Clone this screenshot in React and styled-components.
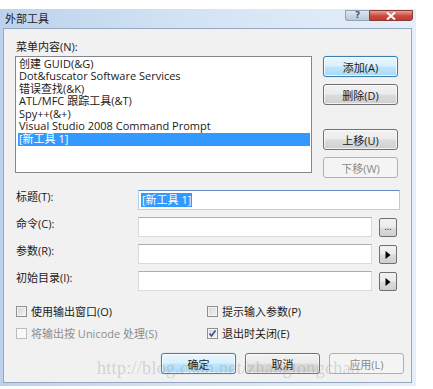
import React from 'react'
import styled, { createGlobalStyle, css } from 'styled-components'

const GlobalStyle = createGlobalStyle`
  body {
    margin: 0;
    background: #fff;
    font-family: "Open Sans", "Noto Sans CJK SC", sans-serif;
    font-size: 11px;
    color: #1a1a1a;
  }
`

const menuItems = [
  '创建 GUID(&G)',
  'Dot&fuscator Software Services',
  '错误查找(&K)',
  'ATL/MFC 跟踪工具(&T)',
  'Spy++(&+)',
  'Visual Studio 2008 Command Prompt',
  '[新工具 1]',
]

const fields = [
  { label: '标题(T):', value: '[新工具 1]', focused: true },
  { label: '命令(C):', button: 'dots' },
  { label: '参数(R):', button: 'arrow' },
  { label: '初始目录(I):', button: 'arrow' },
]

export default function App() {
  return (
    <>
      <GlobalStyle />
      <Window>
        <TitleBar>
          <Caption>外部工具</Caption>
          <CaptionButtons>
            <HelpButton>?</HelpButton>
            <CloseButton>
              <svg width="10" height="8" viewBox="0 0 10 8">
                <path d="M1 0.5 L9 7.5 M9 0.5 L1 7.5" stroke="#fff" strokeWidth="2" />
              </svg>
            </CloseButton>
          </CaptionButtons>
        </TitleBar>
        <Body>
          <TopSection>
            <SectionLabel>菜单内容(N):</SectionLabel>
            <ListBox>
              {menuItems.map((item, i) => (
                <ListItem key={item} selected={i === menuItems.length - 1}>
                  {item}
                </ListItem>
              ))}
            </ListBox>
            <SideButtons>
              <Button variant="default">添加(A)</Button>
              <Button>删除(D)</Button>
              <Button spaced>上移(U)</Button>
              <Button disabled>下移(W)</Button>
            </SideButtons>
          </TopSection>

          <Fields>
            {fields.map((f) => (
              <FieldRow key={f.label}>
                <FieldLabel>{f.label}</FieldLabel>
                <Input focused={f.focused}>
                  {f.value && <Selection>{f.value}</Selection>}
                </Input>
                {f.button && (
                  <SmallButton>
                    {f.button === 'dots' ? (
                      <Dots>...</Dots>
                    ) : (
                      <svg width="6" height="8" viewBox="0 0 6 8">
                        <path d="M0.5 0 L5.5 4 L0.5 8 Z" fill="#000" />
                      </svg>
                    )}
                  </SmallButton>
                )}
              </FieldRow>
            ))}
          </Fields>

          <Checks>
            <CheckItem>
              <Box />
              使用输出窗口(O)
            </CheckItem>
            <CheckItem>
              <Box />
              提示输入参数(P)
            </CheckItem>
            <CheckItem disabled>
              <Box disabled />
              将输出按 Unicode 处理(S)
            </CheckItem>
            <CheckItem>
              <Box>
                <svg width="9" height="9" viewBox="0 0 9 9">
                  <path d="M1.5 4.5 L3.5 7 L7.5 1.5" stroke="#3b4f8a" strokeWidth="1.6" fill="none" />
                </svg>
              </Box>
              退出时关闭(E)
            </CheckItem>
          </Checks>

          <Footer>
            <Button variant="default">确定</Button>
            <Button>取消</Button>
            <Button disabled>应用(L)</Button>
          </Footer>

          <Watermark>http://blog.csdn.net/zhangtongchao</Watermark>
        </Body>
      </Window>
    </>
  )
}

const Window = styled.div`
  margin-top: 9px;
  width: 416px;
  height: 377px;
  display: flex;
  flex-direction: column;
  padding: 0 4px 3px 3px;
  box-sizing: border-box;
  background: linear-gradient(to right, #bcd2ec 0%, #d3e3f4 45%, #e6eff9 100%);
`

const TitleBar = styled.div`
  height: 19px;
  display: flex;
  align-items: flex-start;
  justify-content: space-between;
`

const Caption = styled.div`
  padding: 3px 0 0 2px;
  font-size: 11px;
  line-height: 14px;
  color: #1e1e1e;
`

const CaptionButtons = styled.div`
  display: flex;
  margin-top: 1px;
  margin-right: -1px;
`

const HelpButton = styled.div`
  width: 24px;
  height: 11px;
  box-sizing: border-box;
  border: 1px solid #8ea3bd;
  border-right: none;
  border-radius: 0 0 0 3px;
  background: linear-gradient(#dfe7f1, #b9c7d8);
  color: #4a5a70;
  font: bold 9px/9px "DejaVu Sans", sans-serif;
  text-align: center;
`

const CloseButton = styled.div`
  width: 44px;
  height: 11px;
  box-sizing: border-box;
  border: 1px solid #8a3a33;
  border-radius: 0 0 3px 0;
  background: linear-gradient(#e4a299, #c8493e 55%, #c23b30);
  display: flex;
  align-items: center;
  justify-content: center;
`

const Body = styled.div`
  position: relative;
  flex: 1;
  background: #f1f1f1;
  border: 1px solid #93a8c0;
  padding: 11px 11px 0 11px;
  overflow: hidden;
`

const TopSection = styled.div`
  display: grid;
  grid-template-columns: 297px 76px;
  column-gap: 11px;
  align-items: start;
`

const SectionLabel = styled.div`
  grid-column: 1 / -1;
  line-height: 14px;
  padding-left: 1px;
  margin-bottom: 2px;
`

const ListBox = styled.div`
  height: 117px;
  box-sizing: border-box;
  background: #fff;
  border: 1px solid #828790;
  padding: 0.5px 1px 0 2px;
`

const ListItem = styled.div`
  line-height: 12.6px;
  height: 12.6px;
  padding-left: 1px;
  white-space: nowrap;
  ${(p) =>
    p.selected &&
    css`
      background: #3399ff;
      color: #fff;
    `}
`

const SideButtons = styled.div`
  display: flex;
  flex-direction: column;
  gap: 7px;
`

const Button = styled.div`
  height: 21px;
  width: ${(p) => (p.wide ? '76px' : '75px')};
  box-sizing: border-box;
  display: flex;
  align-items: center;
  justify-content: center;
  border: 1px solid #707070;
  border-radius: 3px;
  background: linear-gradient(#f2f2f2 0%, #ebebeb 48%, #dcdcdc 52%, #cfcfcf 100%);
  box-shadow: inset 0 0 0 1px rgba(255, 255, 255, 0.7);
  color: #1a1a1a;
  ${(p) => p.spaced && 'margin-top: 17px;'}
  ${(p) =>
    p.variant === 'default' &&
    css`
      border-color: #3c7fb1;
      background: linear-gradient(#eaf6fd 0%, #d9f0fc 48%, #bee6fd 52%, #a7d9f5 100%);
      box-shadow: inset 0 0 0 1px rgba(255, 255, 255, 0.8), 0 0 1px #6fb3e0;
    `}
  ${(p) =>
    p.disabled &&
    css`
      border-color: #adb2b5;
      background: #f4f4f4;
      color: #8a8a8a;
      box-shadow: none;
    `}
`

const Fields = styled.div`
  margin-top: 12px;
  display: flex;
  flex-direction: column;
  gap: 7px;
`

const FieldRow = styled.div`
  display: flex;
  align-items: flex-start;
  height: 20px;
`

const FieldLabel = styled.div`
  width: 123px;
  padding-left: 1px;
  box-sizing: border-box;
  line-height: 14px;
`

const Input = styled.div`
  flex: 1;
  height: 20px;
  box-sizing: border-box;
  background: #fff;
  border: 1px solid #d5dbe3;
  border-top-color: #abadb3;
  display: flex;
  align-items: center;
  padding-left: 2px;
  ${(p) =>
    p.focused &&
    css`
      border-color: #b5cfe7;
      border-top-color: #5e8fc2;
    `}
`

const Selection = styled.span`
  background: #3399ff;
  color: #fff;
  line-height: 14px;
  padding: 0 1px;
`

const SmallButton = styled.div`
  width: 18px;
  height: 19px;
  margin: 1px 3px 0 7px;
  box-sizing: border-box;
  border: 1px solid #707070;
  border-radius: 2px;
  background: linear-gradient(#f2f2f2 0%, #ebebeb 48%, #dcdcdc 52%, #cfcfcf 100%);
  display: flex;
  align-items: center;
  justify-content: center;
`

const Dots = styled.span`
  font-size: 9px;
  line-height: 9px;
  margin-top: -3px;
`

const Checks = styled.div`
  margin-top: 12px;
  display: grid;
  grid-template-columns: 191px 1fr;
  row-gap: 6px;
  padding-left: 1px;
`

const CheckItem = styled.div`
  display: flex;
  align-items: center;
  gap: 4px;
  height: 16px;
  color: ${(p) => (p.disabled ? '#8d8d8d' : '#1a1a1a')};
`

const Box = styled.div`
  width: 11px;
  height: 11px;
  box-sizing: border-box;
  border: 1px solid ${(p) => (p.disabled ? '#bcbcbc' : '#8e8f8f')};
  background: ${(p) =>
    p.disabled ? '#f7f7f7' : 'linear-gradient(135deg, #d4d4d4, #f4f4f4)'};
  box-shadow: inset 0 0 0 1px ${(p) => (p.disabled ? '#fafafa' : '#f4f4f4')};
  display: flex;
  align-items: center;
  justify-content: center;
`

const Footer = styled.div`
  margin-top: 12px;
  margin-right: -4px;
  display: flex;
  justify-content: flex-end;
  gap: 9px;
`

const Watermark = styled.div`
  position: absolute;
  left: 93px;
  top: 329px;
  font-family: "Liberation Serif", serif;
  font-size: 18px;
  letter-spacing: 0.3px;
  color: rgba(150, 150, 150, 0.35);
  white-space: nowrap;
  pointer-events: none;
`
